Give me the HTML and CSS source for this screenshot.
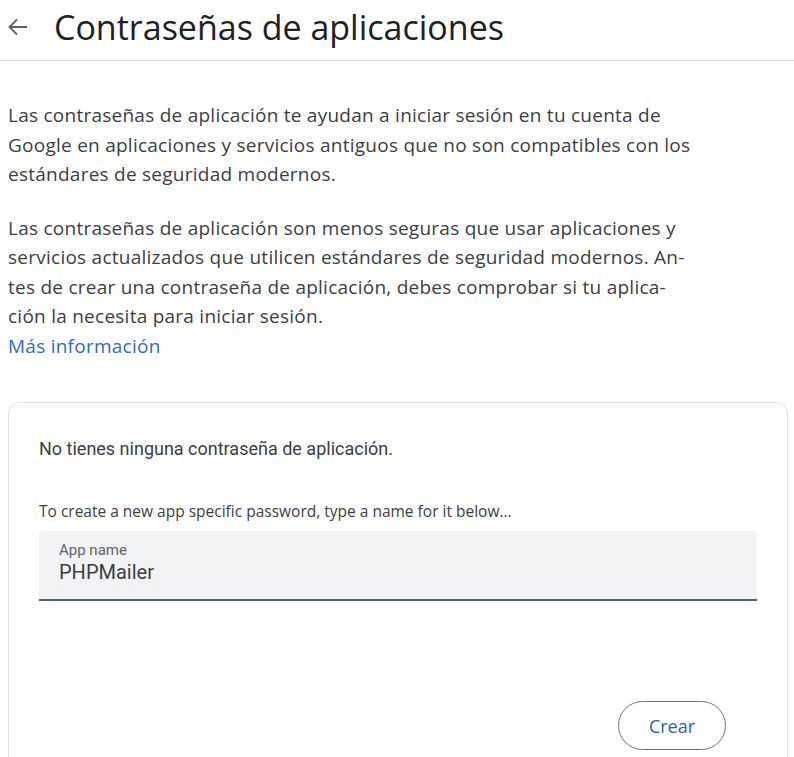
FILE: index.html
```html
<!DOCTYPE html>
<html lang="es">
<head>
<meta charset="utf-8">
<title>Contraseñas de aplicaciones</title>
<link rel="stylesheet" href="styles.css">
</head>
<body>
<header class="header">
  <span class="back" aria-label="Atrás">
    <svg width="24" height="20" viewBox="0 0 24 20"><path d="M21 10H3.5M11 2.5L3.5 10L11 17.5" fill="none" stroke="#5f6368" stroke-width="1.8"/></svg>
  </span>
  <h1 class="title">Contraseñas de aplicaciones</h1>
</header>
<main class="content">
  <p class="para">Las contraseñas de aplicación te ayudan a iniciar sesión en tu cuenta de<br>Google en aplicaciones y servicios antiguos que no son compatibles con los<br>estándares de seguridad modernos.</p>
  <p class="para">Las contraseñas de aplicación son menos seguras que usar aplicaciones y<br>servicios actualizados que utilicen estándares de seguridad modernos. An-<br>tes de crear una contraseña de aplicación, debes comprobar si tu aplica-<br>ción la necesita para iniciar sesión.<br><a class="link" href="#">Más información</a></p>
  <section class="card">
    <p class="none">No tienes ninguna contraseña de aplicación.</p>
    <p class="hint">To create a new app specific password, type a name for it below...</p>
    <div class="field">
      <span class="label">App name</span>
      <span class="value">PHPMailer</span>
    </div>
    <div class="actions">
      <button class="btn">Crear</button>
    </div>
  </section>
</main>
</body>
</html>
```
FILE: styles.css
```css
* { box-sizing: border-box; }
html, body { margin: 0; padding: 0; background: #fff; }
body { font-family: "Open Sans", Roboto, sans-serif; color: #3c4043; width: 794px; height: 757px; overflow: hidden; }
.header { height: 61px; border-bottom: 1px solid #dadce0; display: flex; align-items: center; padding: 0 0 6px 6px; }
.back { display: flex; width: 24px; height: 20px; margin-right: 24px; }
.title { margin: 0; font-family: "Open Sans", sans-serif; font-weight: 400; font-size: 34px; color: #202124; letter-spacing: 0; }
.content { padding: 40px 0 0 8px; }
.para { margin: 0 0 24px; font-size: 19px; line-height: 29.5px; color: #3c4043; letter-spacing: 0.25px; }
.link { color: #2f6fb5; text-decoration: none; }
.card { margin-top: 41px; width: 780px; border: 1px solid #e3e3e3; border-bottom: none; border-radius: 12px 12px 0 0; padding: 36px 30px 0 30px; height: 355px; }
.none { margin: 0; font-family: Roboto, sans-serif; font-size: 18px; color: #3c4043; line-height: 20px; }
.hint { margin: 42px 0 0; font-size: 15.5px; color: #3c4043; line-height: 20px; }
.field { margin-top: 10px; height: 70px; background: #f1f3f4; border-radius: 4px 4px 0 0; border-bottom: 2px solid #4a6480; padding: 10px 20px 0; display: flex; flex-direction: column; }
.label { font-family: Roboto, sans-serif; font-size: 15px; color: #5f6368; line-height: 18px; }
.value { font-family: Roboto, sans-serif; font-size: 20px; color: #3c4043; line-height: 26px; }
.actions { display: flex; justify-content: flex-end; padding-right: 31px; margin-top: 100px; }
.btn { width: 108px; height: 49px; border: 1px solid #747775; border-radius: 25px; background: #fff; color: #2f5fa8; font-family: "Open Sans", sans-serif; font-size: 18px; }
```
